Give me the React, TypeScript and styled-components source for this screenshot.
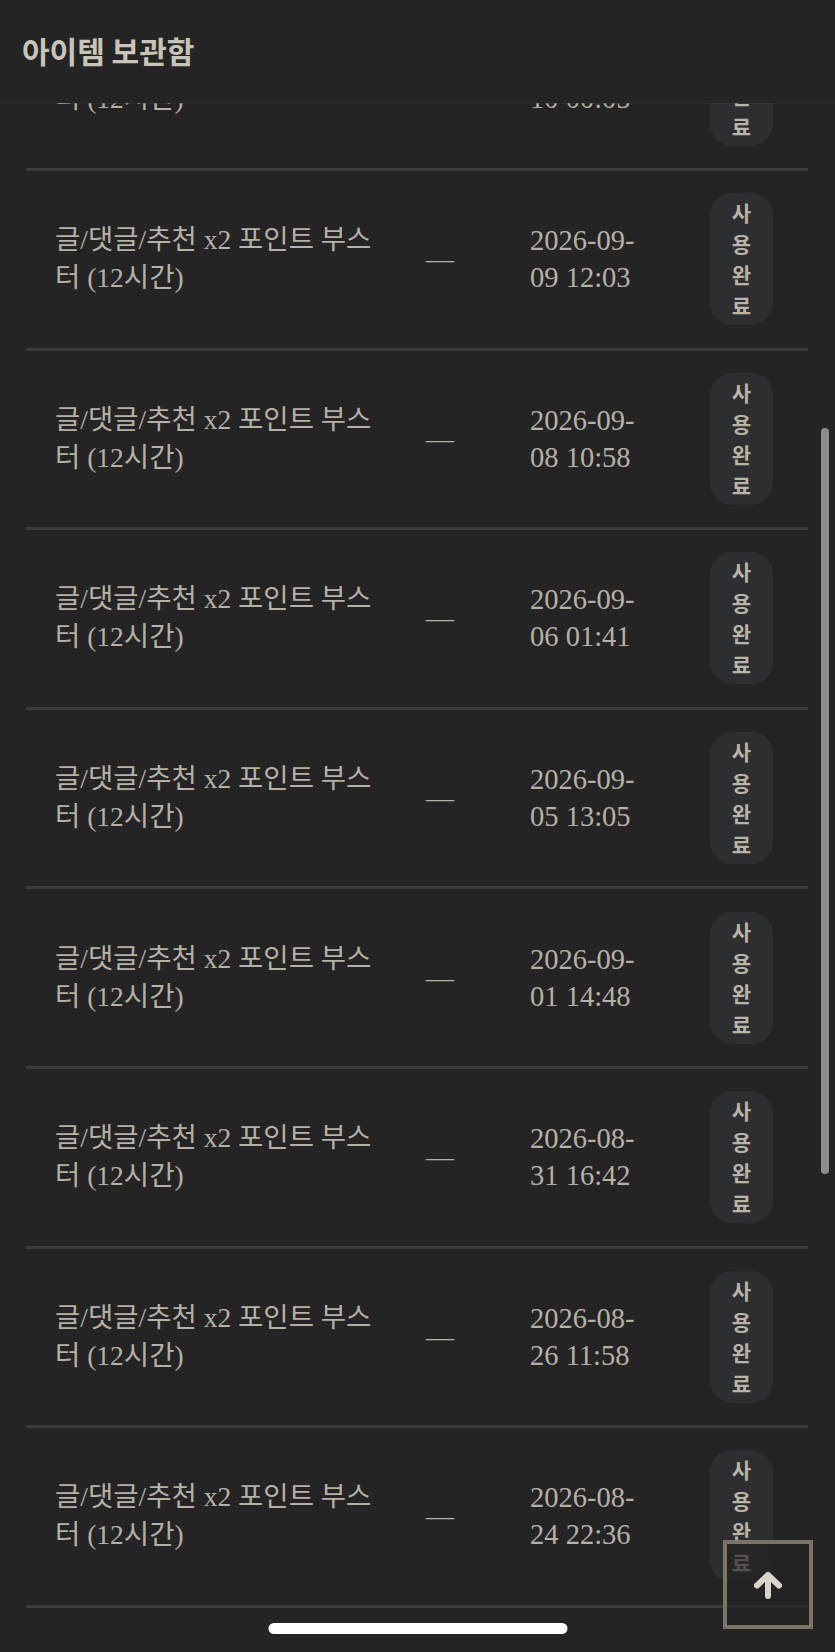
import React from 'react';
import styled, { createGlobalStyle } from 'styled-components';

const GlobalStyle = createGlobalStyle`
  html, body {
    margin: 0;
    padding: 0;
    background: #242424;
  }
  * {
    box-sizing: border-box;
  }
`;

const Page = styled.div`
  position: relative;
  width: 100%;
  height: 1652px;
  overflow: hidden;
  background: #242424;
`;

const Header = styled.header`
  position: absolute;
  top: 0;
  left: 0;
  right: 0;
  height: 103px;
  z-index: 10;
  display: flex;
  align-items: center;
  padding: 0 0 4px 22px;
  background: #242424;
  box-shadow: 0 1px 0 rgba(70, 70, 48, 0.3);
`;

const Title = styled.h1`
  margin: 0;
  font-family: 'Noto Sans CJK KR', 'Noto Sans', sans-serif;
  font-size: 30px;
  font-weight: 700;
  line-height: 1;
  color: #c9c4b8;
`;

const ScrollArea = styled.main`
  height: 100%;
  overflow: hidden;
`;

const List = styled.ul`
  list-style: none;
  margin: -8.6px 27px 0 26px;
  padding: 0;
`;

const Row = styled.li`
  display: grid;
  grid-template-columns: 330px 110px 1fr 63px;
  align-items: center;
  height: 179.6px;
  padding: 0 35px 0 29px;
  border-bottom: 3px solid #3b3b3b;
  font-family: 'Liberation Serif', 'Noto Sans CJK KR', serif;
  color: #b6b1a5;
`;

const Name = styled.div`
  font-size: 27.5px;
  line-height: 38px;
`;

const Qty = styled.div`
  font-size: 28px;
  line-height: 36px;
  text-align: center;
`;

const DateCell = styled.div`
  padding-left: 35px;
`;

const DateText = styled.span`
  display: block;
  width: 118px;
  font-size: 28.5px;
  line-height: 37px;
`;

const Badge = styled.span<{ $done?: boolean }>`
  justify-self: end;
  width: 63px;
  padding: 4px 20px;
  border-radius: 22px;
  background: ${({ $done }) => ($done ? '#2d2e30' : '#3a3a2e')};
  font-family: 'Noto Sans CJK KR', sans-serif;
  font-size: 21px;
  font-weight: 700;
  line-height: 31px;
  text-align: center;
  color: #bab4a8;
`;

const ScrollThumb = styled.div`
  position: absolute;
  top: 428px;
  right: 6px;
  width: 8px;
  height: 746px;
  border-radius: 4px;
  background: #8d8d8d;
  z-index: 15;
`;

const TopButton = styled.button`
  position: absolute;
  right: 22px;
  bottom: 23px;
  width: 90px;
  height: 89px;
  padding: 0;
  display: flex;
  align-items: center;
  justify-content: center;
  border: 4px solid #7b7365;
  background: rgba(34, 34, 34, 0.68);
  cursor: pointer;
  z-index: 20;
`;

const HomeIndicator = styled.div`
  position: absolute;
  bottom: 18px;
  left: 50%;
  transform: translateX(-50%);
  width: 299px;
  height: 11px;
  border-radius: 6px;
  background: #ffffff;
  z-index: 30;
`;

const ArrowUp = () => (
  <svg width="30" height="28" viewBox="0 0 30 28" fill="none">
    <path
      d="M15 25V4M4 14.5L15 4L26 14.5"
      stroke="#d9d4c9"
      strokeWidth="6"
      strokeLinecap="round"
      strokeLinejoin="round"
    />
  </svg>
);

const items = [
  '2026-09-10 00:05',
  '2026-09-09 12:03',
  '2026-09-08 10:58',
  '2026-09-06 01:41',
  '2026-09-05 13:05',
  '2026-09-01 14:48',
  '2026-08-31 16:42',
  '2026-08-26 11:58',
  '2026-08-24 22:36',
];

const App = () => {
  return (
    <Page>
      <GlobalStyle />
      <Header>
        <Title>아이템 보관함</Title>
      </Header>
      <ScrollArea>
        <List>
          {items.map((date) => (
            <Row key={date}>
              <Name>글/댓글/추천 x2 포인트 부스터 (12시간)</Name>
              <Qty>—</Qty>
              <DateCell>
                <DateText>
                  {date.slice(0, 8)}
                  <wbr />
                  {date.slice(8)}
                </DateText>
              </DateCell>
              <Badge $done>사용완료</Badge>
            </Row>
          ))}
        </List>
      </ScrollArea>
      <ScrollThumb />
      <TopButton aria-label="맨 위로">
        <ArrowUp />
      </TopButton>
      <HomeIndicator />
    </Page>
  );
};

export default App;
